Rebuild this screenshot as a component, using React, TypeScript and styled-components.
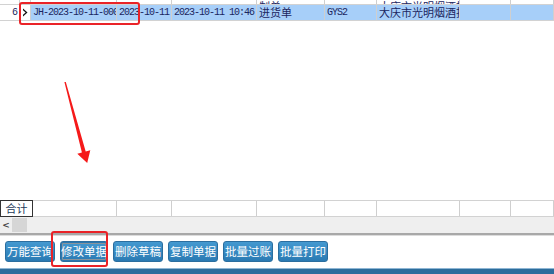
import styled, { createGlobalStyle } from 'styled-components';

const GlobalStyle = createGlobalStyle`
	html, body {
		margin: 0;
		padding: 0;
		background: #ffffff;
		overflow: hidden;
	}
	body {
		font-family: 'Noto Sans CJK SC', 'Noto Sans', sans-serif;
	}
`;

const dataCols = '20px 11px 86px 55px 85px 68px 52px 83px 51px 1fr';
const totalCols = '33px 84px 55px 85px 68px 52px 83px 51px 1fr';

const Page = styled.div`
	position: relative;
	width: 554px;
	height: 274px;
	display: flex;
	flex-direction: column;
	background: #ffffff;
`;

const Row = styled.div<{ $cols: string; $h: number; $bg?: string }>`
	display: grid;
	grid-template-columns: ${(p) => p.$cols};
	height: ${(p) => p.$h}px;
	background: ${(p) => p.$bg || '#ffffff'};
	border-bottom: 1px solid #d2d2d2;
	flex-shrink: 0;
`;

const Cell = styled.div<{ $align?: string; $mono?: boolean; $bg?: string }>`
	display: flex;
	align-items: center;
	justify-content: ${(p) => p.$align || 'flex-start'};
	padding: 0 2px;
	overflow: hidden;
	white-space: nowrap;
	border-right: 1px solid #cfcfcf;
	background: ${(p) => p.$bg || 'transparent'};
	color: #1b2660;
	font-family: ${(p) =>
		p.$mono ? "'Liberation Mono', 'DejaVu Sans Mono', monospace" : "'Noto Sans CJK SC', sans-serif"};
	font-size: ${(p) => (p.$mono ? '10px' : '11px')};
	letter-spacing: ${(p) => (p.$mono ? '-1px' : '0')};
	line-height: 13px;
`;

const CutCell = styled(Cell)`
	align-items: flex-end;
	& > span {
		margin-bottom: -9px;
	}
`;

const Pointer = styled.div`
	display: flex;
	align-items: center;
	justify-content: center;
	background: #ffffff;
	border-right: 1px solid #cfcfcf;
`;

const Filler = styled.div`
	flex: 1;
`;

const TotalRow = styled(Row)`
	border-top: 1px solid #d2d2d2;
`;

const TotalLabel = styled(Cell)`
	border: 1px solid #333333;
	justify-content: center;
	color: #1d3a5a;
	margin: -1px 0 -1px 0;
`;

const ScrollBar = styled.div`
	display: flex;
	align-items: center;
	height: 16px;
	background: #efefef;
	border-bottom: 2px solid #a8a8a8;
	box-shadow: 0 1px 0 #dcdcdc;
	flex-shrink: 0;
`;

const ScrollArrow = styled.div`
	width: 12px;
	display: flex;
	justify-content: center;
	font-family: 'DejaVu Sans', sans-serif;
	font-size: 9px;
	font-weight: bold;
	color: #444444;
`;

const Thumb = styled.div`
	width: 15px;
	height: 14px;
	background: #d6d6d6;
`;

const ButtonBar = styled.div`
	display: flex;
	align-items: flex-start;
	gap: 5px;
	padding: 5px 0 0 5px;
	flex: 0 0 32px;
	box-sizing: border-box;
	margin-top: 1px;
`;

const Button = styled.div<{ $w: number; $focused?: boolean }>`
	width: ${(p) => p.$w}px;
	height: 21px;
	box-sizing: border-box;
	display: flex;
	align-items: center;
	justify-content: center;
	border-radius: 3px;
	border: 1px solid #2b6e9f;
	background: linear-gradient(#4499d0, #2a7ab3);
	color: #ffffff;
	font-size: 11.5px;
	line-height: 1;
	box-shadow: ${(p) => (p.$focused ? 'inset 0 0 0 1px #2a78b0, inset 0 0 0 2px #8a949c' : 'none')};
`;

const BottomStrip = styled.div`
	height: 5px;
	background: #2d6d9c;
	border-top: 1px solid #8fb6d4;
	flex-shrink: 0;
`;

const Mark = styled.div<{ $x: number; $y: number; $w: number; $h: number }>`
	position: absolute;
	left: ${(p) => p.$x}px;
	top: ${(p) => p.$y}px;
	width: ${(p) => p.$w}px;
	height: ${(p) => p.$h}px;
	box-sizing: border-box;
	border: 2px solid #ea2328;
	border-radius: 3px;
	pointer-events: none;
`;

const Arrow = styled.svg`
	position: absolute;
	left: 0;
	top: 0;
	pointer-events: none;
`;

const buttons = ['万能查询', '修改单据', '删除草稿', '复制单据', '批量过账', '批量打印'];

const App = () => (
	<Page>
		<GlobalStyle />
		<Row $cols={dataCols} $h={4}>
			<Cell />
			<Pointer />
			<Cell />
			<Cell />
			<Cell />
			<CutCell>
				<span>制单</span>
			</CutCell>
			<Cell />
			<CutCell>
				<span>大庆市光明烟酒批发</span>
			</CutCell>
			<Cell />
			<Cell />
		</Row>
		<Row $cols={dataCols} $h={15} $bg="#a7cff9">
			<Cell $align="flex-end" $mono $bg="#ffffff">
				6
			</Cell>
			<Pointer>
				<svg width="7" height="9" viewBox="0 0 7 9">
					<path d="M1 0.5 L5.5 4.5 L1 8.5 L1 6.8 L3.6 4.5 L1 2.2 Z" fill="#111111" />
				</svg>
			</Pointer>
			<Cell $mono>JH-2023-10-11-0001</Cell>
			<Cell $mono>2023-10-11</Cell>
			<Cell $mono>2023-10-11 10:46</Cell>
			<Cell>进货单</Cell>
			<Cell $mono>GYS2</Cell>
			<Cell>大庆市光明烟酒批发</Cell>
			<Cell />
			<Cell />
		</Row>
		<Filler />
		<TotalRow $cols={totalCols} $h={15}>
			<TotalLabel>合计</TotalLabel>
			<Cell />
			<Cell />
			<Cell />
			<Cell />
			<Cell />
			<Cell />
			<Cell />
			<Cell />
		</TotalRow>
		<ScrollBar>
			<ScrollArrow>&lt;</ScrollArrow>
			<Thumb />
		</ScrollBar>
		<ButtonBar>
			{buttons.map((b, i) => (
				<Button key={b} $w={i === 1 ? 48 : 50} $focused={i === 1}>
					{b}
				</Button>
			))}
		</ButtonBar>
		<BottomStrip />
		<Mark $x={19} $y={2} $w={121} $h={23} />
		<Mark $x={51} $y={231} $w={57} $h={36} />
		<Arrow width="554" height="274">
			<polygon
				points="64.4,82 65.8,82 85.7,151.5 90.3,150.2 87.2,163 77.3,153.8 81.9,152.6"
				fill="#f51a1a"
			/>
		</Arrow>
	</Page>
);

export default App;
